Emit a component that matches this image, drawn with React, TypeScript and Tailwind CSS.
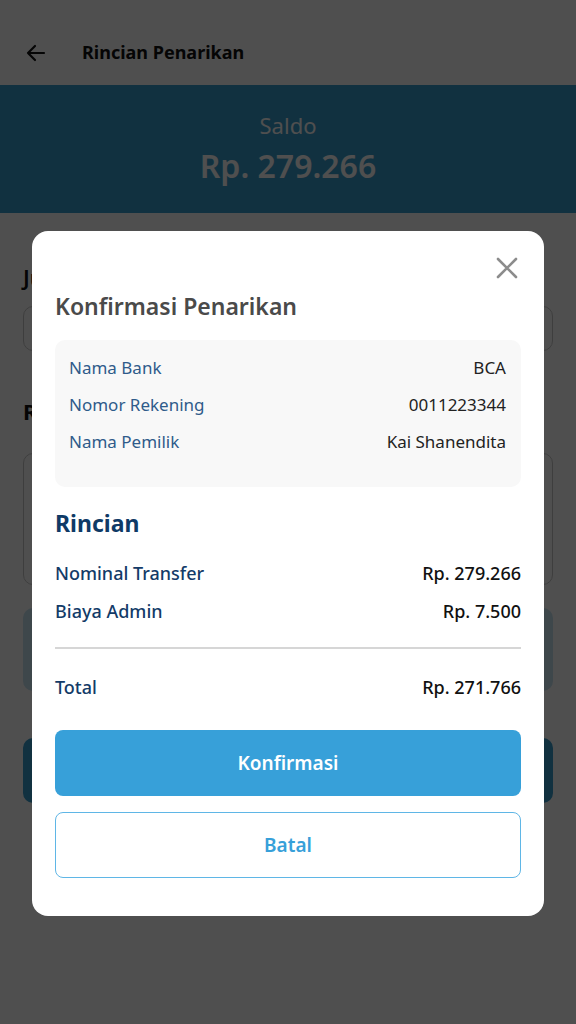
import React from "react";

const font = { fontFamily: '"Noto Sans", "Open Sans", sans-serif' };

function Row({ label, value }: { label: string; value: string }) {
  return (
    <div className="flex h-[37px] items-center justify-between">
      <span className="text-[17px] text-[#2f5b8a]">{label}</span>
      <span className="text-[17px] text-[#222222]">{value}</span>
    </div>
  );
}

function Line({ label, value }: { label: string; value: string }) {
  return (
    <div className="flex h-[38px] items-center justify-between">
      <span className="text-[18px] font-medium text-[#133b68]">{label}</span>
      <span className="text-[18px] font-medium text-[#111111]">{value}</span>
    </div>
  );
}

export default function App() {
  return (
    <div className="relative h-[1024px] w-[576px] overflow-hidden bg-white" style={font}>
      {/* underlying page */}
      <div className="flex h-[85px] items-center gap-[34px] px-[24px] pt-[20px]">
        <svg width="24" height="24" viewBox="0 0 24 24" fill="none" stroke="#111" strokeWidth="2.2" strokeLinecap="round" strokeLinejoin="round">
          <path d="M20 12H4M11 5l-7 7 7 7" />
        </svg>
        <span className="text-[18px] font-bold text-[#111]">Rincian Penarikan</span>
      </div>
      <div className="flex h-[128px] flex-col items-center justify-center bg-[#389dcd] text-white">
        <span className="text-[22px] leading-[28px]">Saldo</span>
        <span className="mt-[5px] text-[32px] font-semibold leading-[44px]">Rp. 279.266</span>
      </div>
      <div className="flex flex-col px-[23px] pt-[48px]">
        <span className="text-[22px] font-semibold text-[#111]">Jumlah Penarikan</span>
        <div className="mt-[12px] h-[45px] rounded-[10px] border border-[#c9c9c9]" />
        <span className="mt-[44px] text-[22px] font-bold text-[#111]">Rekening Tujuan</span>
        <div className="mt-[25px] h-[132px] rounded-[10px] border border-[#c9c9c9]" />
        <div className="mt-[23px] h-[83px] rounded-[10px] bg-[#c9e4f2]" />
        <div className="mt-[47px] h-[65px] rounded-[10px] bg-[#389dcd]" />
      </div>

      {/* overlay */}
      <div className="absolute inset-0 flex justify-center bg-black/[0.69] pt-[231px]">
        <div className="flex h-[685px] w-[512px] flex-col rounded-[16px] bg-white px-[23px]">
          <div className="flex justify-end pt-[25px] pr-[2px]">
            <svg width="24" height="24" viewBox="0 0 24 24" fill="none" stroke="#8c8c8c" strokeWidth="2.6" strokeLinecap="round">
              <path d="M3 3l18 18M21 3L3 21" />
            </svg>
          </div>
          <h2 className="mt-[11px] text-[23px] font-semibold leading-[30px] text-[#4a4a4a]">Konfirmasi Penarikan</h2>
          <div className="mt-[19px] h-[147px] rounded-[10px] bg-[#f8f8f8] pl-[14px] pr-[15px] pt-[9px]">
            <Row label="Nama Bank" value="BCA" />
            <Row label="Nomor Rekening" value="0011223344" />
            <Row label="Nama Pemilik" value="Kai Shanendita" />
          </div>
          <h3 className="mt-[21px] text-[23px] font-bold leading-[30px] text-[#0f3a66]">Rincian</h3>
          <div className="mt-[16px] flex flex-col">
            <Line label="Nominal Transfer" value="Rp. 279.266" />
            <Line label="Biaya Admin" value="Rp. 7.500" />
          </div>
          <div className="mt-[17px] h-[2px] bg-[#d6d6d6]" />
          <div className="mt-[19px]">
            <Line label="Total" value="Rp. 271.766" />
          </div>
          <button className="mt-[24px] flex h-[66px] items-center justify-center rounded-[8px] bg-[#37a0d9] text-[19px] font-semibold text-white">
            Konfirmasi
          </button>
          <button className="mt-[16px] flex h-[66px] items-center justify-center rounded-[8px] border border-[#5fb6e6] bg-white text-[19px] font-semibold text-[#37a0d9]">
            Batal
          </button>
        </div>
      </div>
    </div>
  );
}
